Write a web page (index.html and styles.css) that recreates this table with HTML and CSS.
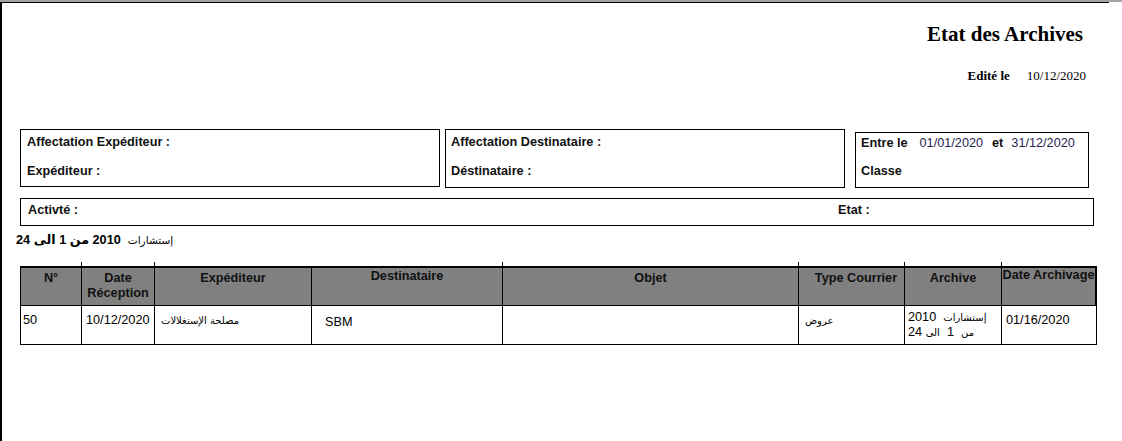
FILE: index.html
```html
<!DOCTYPE html>
<html lang="fr">
<head>
<meta charset="utf-8">
<title>Etat des Archives</title>
<link rel="stylesheet" href="styles.css">
</head>
<body>
<div class="screen">
  <div class="page">
    <header class="report-head">
      <h1 class="title">Etat des Archives</h1>
      <p class="edited"><span class="edited-label">Edité le</span><span class="edited-date">10/12/2020</span></p>
    </header>

    <section class="filters">
      <div class="box box-exp">
        <div class="label">Affectation Expéditeur :</div>
        <div class="label">Expéditeur :</div>
      </div>
      <div class="box box-dest">
        <div class="label">Affectation Destinataire :</div>
        <div class="label">Déstinataire :</div>
      </div>
      <div class="box box-period">
        <div class="label"><span class="kw">Entre le</span><span class="val">01/01/2020</span><span class="kw">et</span><span class="val">31/12/2020</span></div>
        <div class="label">Classe</div>
      </div>
    </section>

    <div class="box box-activity">
      <span class="label">Activté :</span>
      <span class="label">Etat :</span>
    </div>

    <p class="group-title"><span class="ar">إستشارات</span>  <b>2010 من 1 الى 24</b></p>

    <table class="grid">
      <colgroup>
        <col class="c-no"><col class="c-date"><col class="c-exp"><col class="c-dest">
        <col class="c-obj"><col class="c-type"><col class="c-arch"><col class="c-darch">
      </colgroup>
      <tbody>
        <tr class="stubs">
          <td class="stub"></td><td class="stub"></td><td></td><td class="stub"></td>
          <td class="stub"></td><td class="stub"></td><td class="stub"></td><td></td>
        </tr>
        <tr class="head">
          <th class="first">N°</th>
          <th>Date<br>Réception</th>
          <th>Expéditeur</th>
          <th class="th-dest">Destinataire</th>
          <th>Objet</th>
          <th class="th-type">Type Courrier</th>
          <th>Archive</th>
          <th class="last th-darch">Date Archivage</th>
        </tr>
        <tr class="row">
          <td class="first">50</td>
          <td>10/12/2020</td>
          <td class="td-exp"><span class="ar">مصلحة الإستغلالات</span></td>
          <td class="td-dest">SBM</td>
          <td></td>
          <td class="td-type"><span class="ar">عروض</span></td>
          <td class="td-arch"><span class="ar">إستشارات</span>  2010<br><span class="ar">من</span>  1  <span class="ar">الى</span> 24</td>
          <td class="td-darch">01/16/2020</td>
        </tr>
      </tbody>
    </table>
  </div>
</div>
</body>
</html>
```

FILE: styles.css
```css
* {
  box-sizing: border-box;
}

html,
body {
  margin: 0;
  padding: 0;
  background: #fff;
}

body {
  font-family: "Liberation Sans", Arial, "DejaVu Sans", sans-serif;
  color: #000;
  font-size: 12.7px;
  line-height: 15px;
}

.screen {
  height: 441px;
  overflow: hidden;
  border-top: 2px solid #a3a3a3;
}

.page {
  width: 1109px;
  height: 439px;
  border-top: 1px solid #000;
  border-left: 2px solid #000;
}

/* header */
.report-head {
  text-align: right;
}

.title {
  margin: 19px 26px 0 0;
  font-family: "Liberation Serif", "Times New Roman", serif;
  font-weight: bold;
  font-size: 21px;
  line-height: 24px;
}

.edited {
  margin: 22px 23px 0 0;
  font-family: "Liberation Serif", "Times New Roman", serif;
  font-size: 13px;
  line-height: 15px;
}

.edited-label {
  font-weight: bold;
  margin-right: 17px;
}

/* filter boxes */
.filters {
  display: flex;
  align-items: flex-start;
  margin: 46px 0 0 18px;
}

.box {
  border: 1px solid #000;
}

.label {
  font-weight: bold;
  color: #111;
}

.box-exp,
.box-dest {
  display: flex;
  flex-direction: column;
  gap: 14px;
  padding: 5px 0 0 6px;
}

.box-exp {
  width: 420px;
  height: 58px;
}

.box-dest {
  width: 400px;
  height: 59px;
  margin-left: 5px;
  padding-left: 5px;
}

.box-period {
  width: 234px;
  height: 56px;
  margin: 3px 0 0 10px;
  padding: 3px 0 0 5px;
  display: flex;
  flex-direction: column;
  gap: 13px;
}

.kw {
  font-weight: bold;
}

.val {
  font-weight: normal;
  color: #1e1e50;
  margin: 0 9px 0 12px;
}

.val + .kw + .val {
  margin-left: 8px;
}

.box-activity {
  display: grid;
  grid-template-columns: 810px 1fr;
  width: 1074px;
  height: 28px;
  margin: 10px 0 0 18px;
  padding: 4px 0 0 7px;
}

/* group title */
.group-title {
  margin: 7px 0 0 14px;
  line-height: 15px;
  font-weight: bold;
  white-space: pre;
}

.ar {
  font-family: "DejaVu Sans", sans-serif;
  font-size: 10px;
  font-weight: normal;
}

.group-title .ar {
  font-size: 10.5px;
}

.group-title b {
  font-weight: bold;
}

/* table */
.grid {
  margin: 14px 0 0 18px;
  width: 1077px;
  table-layout: fixed;
  border-collapse: separate;
  border-spacing: 0;
}

.c-no { width: 62px; }
.c-date { width: 73px; }
.c-exp { width: 157px; }
.c-dest { width: 191px; }
.c-obj { width: 296px; }
.c-type { width: 106px; }
.c-arch { width: 97px; }
.c-darch { width: 95px; }

.stubs td {
  height: 4px;
  padding: 0;
}

.stubs .stub {
  border-right: 1px solid #000;
}

.grid th,
.grid td {
  vertical-align: top;
}

.head {
  height: 40px;
}

.head th {
  background: #808080;
  color: #111;
  font-weight: bold;
  text-align: center;
  padding: 3px 1px 0;
  border-top: 2px solid #000;
  border-right: 1px solid #000;
  border-bottom: 1px solid #000;
  line-height: 15px;
}

.head .first {
  border-left: 1px solid #000;
}

.head .last {
  border-right: 2px solid #000;
}

.head .th-dest {
  padding-top: 1px;
}

.head .th-type {
  padding-left: 10px;
}

.head .th-darch {
  padding: 1px 0 0;
  line-height: 12px;
  white-space: nowrap;
}

.row {
  height: 39px;
}

.row td {
  padding: 7px 2px 0 4px;
  border-right: 1px solid #000;
  border-bottom: 1px solid #000;
  text-align: left;
}

.row .first {
  border-left: 1px solid #000;
  padding-left: 2px;
}

.row .td-exp {
  padding-left: 6px;
}

.row .td-dest {
  padding: 9px 0 0 13px;
}

.row .td-type {
  padding-left: 6px;
}

.row .td-arch {
  padding: 4px 0 0 3px;
  line-height: 14px;
  white-space: pre;
}

.row .td-darch {
  padding-left: 4px;
}
```
